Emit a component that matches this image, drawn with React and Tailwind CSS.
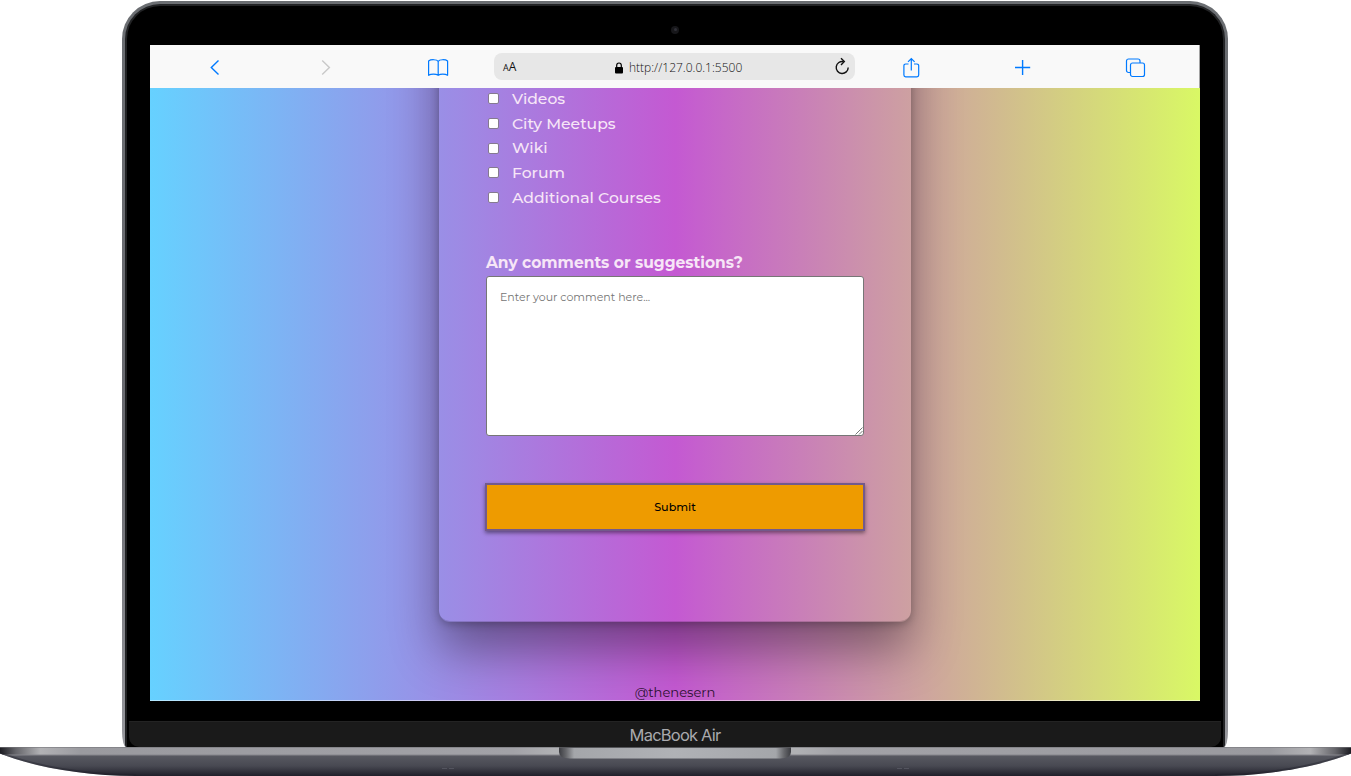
const options = ["Videos", "City Meetups", "Wiki", "Forum", "Additional Courses"];

function Toolbar() {
  return (
    <div className="flex h-[43px] shrink-0 items-center border-r border-[#a3a3a3] bg-[#f9f9f9] pl-2 text-[#007aff]">
      <div className="flex w-28 justify-center">
        <svg width="24" height="24" viewBox="0 0 24 24" fill="none" stroke="currentColor" strokeWidth="1.4">
          <path d="M16.5 5.5 L9.3 12.5 L16.5 19.5" />
        </svg>
      </div>
      <div className="flex w-28 justify-center text-[#c9c9c9]">
        <svg width="24" height="24" viewBox="0 0 24 24" fill="none" stroke="currentColor" strokeWidth="1.4">
          <path d="M8.2 5.5 L15.4 12.5 L8.2 19.5" />
        </svg>
      </div>
      <div className="flex w-28 justify-center">
        <svg width="24" height="24" viewBox="0 0 24 24" fill="none" stroke="currentColor" strokeWidth="1.2" strokeLinejoin="round">
          <path d="M12.2 6.3 C10.9 4.3 4.8 4.2 2.6 6 V20.3 C5 18.8 10 18.8 12.2 20.3 C14.4 18.8 19.2 18.8 21.6 20.3 V6 C19.4 4.2 13.5 4.3 12.2 6.3 V20.3" />
        </svg>
      </div>
      <div className="flex h-[27px] w-[361px] items-center rounded-[8px] bg-[#e7e7e7] pr-1 pl-2 font-['Open_Sans','Noto_Sans',sans-serif] text-[#111]">
        <div className="flex w-[112px] items-baseline pt-px pl-px leading-none">
          <span className="text-[9px]">A</span>
          <span className="text-[12px]">A</span>
        </div>
        <svg width="10" height="12" viewBox="0 0 10 12" className="mt-0.5 text-black">
          <rect x="1" y="5" width="8" height="6.5" rx="1" fill="currentColor" />
          <path d="M2.7 5.5 V3.3 a2.3 2.3 0 0 1 4.6 0 V5.5" fill="none" stroke="currentColor" strokeWidth="1.2" />
        </svg>
        <span className="mt-0.5 ml-[5px] text-[12px] font-light">http://127.0.0.1:5500</span>
        <svg width="18" height="20" viewBox="0 0 18 20" fill="none" stroke="#111" strokeWidth="1.4" className="ml-auto">
          <path d="M10.5 4.6 A6 6 0 1 0 15.2 10.5" />
          <path d="M8 1.3 L11.3 4.6 L8 7.9" />
        </svg>
      </div>
      <div className="flex w-28 justify-center">
        <svg width="24" height="24" viewBox="0 0 24 24" fill="none" stroke="currentColor" strokeWidth="1.2">
          <path d="M9.5 9 H6.6 A1.7 1.7 0 0 0 4.9 10.7 V20.1 A1.7 1.7 0 0 0 6.6 21.8 H18 A1.7 1.7 0 0 0 19.7 20.1 V10.7 A1.7 1.7 0 0 0 18 9 H15" />
          <path d="M12.3 15.5 V3.5 M9 6.8 L12.3 3.5 L15.6 6.8" />
        </svg>
      </div>
      <div className="flex w-28 justify-center">
        <svg width="24" height="24" viewBox="0 0 24 24" stroke="currentColor" strokeWidth="1.4">
          <path d="M11.6 5 V20 M4 12.5 H19.2" />
        </svg>
      </div>
      <div className="flex w-28 justify-center">
        <svg width="24" height="24" viewBox="0 0 24 24" fill="none" stroke="currentColor" strokeWidth="1.2">
          <path d="M7.5 17.5 H5.5 A2 2 0 0 1 3.5 15.5 V6 A2 2 0 0 1 5.5 4 H15 A2 2 0 0 1 17 6 V8" />
          <rect x="7.5" y="8" width="14" height="13.5" rx="2" />
        </svg>
      </div>
    </div>
  );
}

function Survey() {
  return (
    <div className="flex h-[613px] flex-col items-center overflow-hidden border-b border-white/50 bg-[linear-gradient(90deg,#66d1ff,#c459d2_50%,#d9f865)] bg-origin-border font-[Montserrat,sans-serif]">
      <div className="-mt-[120px] flex h-[654px] w-[472px] shrink-0 flex-col rounded-b-[11px] border-b border-black/15 px-[47px] pt-[118.3px] text-[#f7e6f7] shadow-[0_28px_48px_rgba(0,0,0,0.38),0_2px_8px_rgba(0,0,0,0.25)]">
        <ul>
          {options.map((o) => (
            <li key={o} className="flex h-[24.7px] items-center">
              <span className="ml-[1.5px] size-[11px] rounded-[2px] border border-[#857a8f] bg-white" />
              <span className="ml-[13.5px] text-[15.6px] font-medium">{o}</span>
            </li>
          ))}
        </ul>
        <div className="mt-[40.2px] flex h-[26px] items-center">
          <span className="text-[15.5px] font-bold">Any comments or suggestions?</span>
        </div>
        <div className="relative h-[160px] w-[378px] shrink-0 rounded-[3px] border border-[#767676] bg-white px-[13px] py-3 text-[11px] text-[#757575]">
          Enter your comment here...
          <svg width="8" height="8" viewBox="0 0 8 8" className="absolute right-0 bottom-0" stroke="#555" strokeWidth="0.8">
            <path d="M0.5 7.5 L7.5 0.5 M4 7.5 L7.5 4" />
          </svg>
        </div>
        <button className="mt-[47px] -ml-px flex h-[48px] w-[380px] shrink-0 items-center justify-center border-2 border-[#735a8c] bg-[#ee9b00] text-[11.2px] font-medium text-black shadow-[0_2px_4px_rgba(0,0,0,0.45)]">
          Submit
        </button>
      </div>
      <footer className="mt-[61px] text-[13.1px] text-[#2b1030]">@thenesern</footer>
    </div>
  );
}

function Base() {
  return (
    <svg width="1351" height="29" viewBox="0 0 1351 29" className="block shrink-0">
      <defs>
        <linearGradient id="body" x1="0" y1="0" x2="0" y2="1">
          <stop offset="0.28" stopColor="#595a62" />
          <stop offset="0.65" stopColor="#484952" />
          <stop offset="1" stopColor="#20202a" />
        </linearGradient>
        <linearGradient id="edge">
          <stop offset="0" stopColor="#1c1c22" />
          <stop offset="0.012" stopColor="#66666b" />
          <stop offset="0.03" stopColor="#b2b2b5" />
          <stop offset="0.06" stopColor="#9a9a9f" />
          <stop offset="0.38" stopColor="#a2a2a7" />
          <stop offset="0.41" stopColor="#b0b1b4" />
          <stop offset="0.59" stopColor="#b0b1b4" />
          <stop offset="0.62" stopColor="#a2a2a7" />
          <stop offset="0.94" stopColor="#9a9a9f" />
          <stop offset="0.97" stopColor="#b2b2b5" />
          <stop offset="0.988" stopColor="#66666b" />
          <stop offset="1" stopColor="#1c1c22" />
        </linearGradient>
        <linearGradient id="notch">
          <stop offset="0" stopColor="#3c3d42" />
          <stop offset="0.03" stopColor="#66676b" />
          <stop offset="0.065" stopColor="#a4a6aa" />
          <stop offset="0.5" stopColor="#b0b2b6" />
          <stop offset="0.935" stopColor="#a4a6aa" />
          <stop offset="0.97" stopColor="#66676b" />
          <stop offset="1" stopColor="#3c3d42" />
        </linearGradient>
        <clipPath id="shape">
          <path d="M0 0 H1351 V6.5 C1320 19 1270 29 1215 29 H136 C81 29 31 19 0 6.5 Z" />
        </clipPath>
      </defs>
      <g clipPath="url(#shape)">
        <rect width="1351" height="29" fill="url(#body)" />
        <rect width="1351" height="8" fill="url(#edge)" />
        <rect width="1351" height="1" fill="#77777c" opacity="0.6" />
        <rect y="7.5" width="1351" height="1" fill="#85868c" />
        <path d="M0 6.5 C31 19 81 29 136 29 M1351 6.5 C1320 19 1270 29 1215 29" stroke="#20202a" strokeWidth="4" strokeOpacity="0.4" fill="none" />
        <path d="M442 21.5 h5 M449 21.5 h5 M897 21.5 h5 M904 21.5 h5" stroke="#53545e" strokeWidth="1" />
      </g>
      <path d="M559 0 H791 V5 Q791 11.5 780 11.5 H570 Q559 11.5 559 5 Z" fill="url(#notch)" />
      <rect x="559" y="0" width="232" height="1" fill="#55565a" />
    </svg>
  );
}

export default function App() {
  return (
    <div className="flex h-[776px] w-[1351px] flex-col overflow-hidden bg-white pt-px">
      <div className="ml-[122px] h-[746px] w-[1106px] shrink-0 rounded-[38px_38px_4px_4px/38px_38px_16px_16px] bg-[linear-gradient(180deg,#6b6e72,#68696f_60%,#98999e)] px-[3px] pt-[2.5px]">
        <div className="flex h-full w-full flex-col rounded-[35px_35px_2px_2px] border-x-2 border-t-2 border-[#222325] bg-black">
          <div className="flex h-[39.5px] shrink-0 items-center justify-center pt-[9px]">
            <span className="flex size-[8px] items-center justify-center rounded-full bg-[#17171a]">
              <span className="size-[3px] rounded-full bg-[#303038]" />
            </span>
          </div>
          <div className="mx-auto w-[1050px] shrink-0">
            <Toolbar />
            <Survey />
          </div>
          <div className="mx-[2px] mt-5 flex flex-1 items-center justify-center rounded-b-[10px] border-t border-[#232323] bg-[#1a1a1a] pt-0.5 font-[Inter,sans-serif] text-[16.5px] leading-none tracking-[-0.8px] text-[#a9a9ad]">
            MacBook Air
          </div>
        </div>
      </div>
      <Base />
    </div>
  );
}
